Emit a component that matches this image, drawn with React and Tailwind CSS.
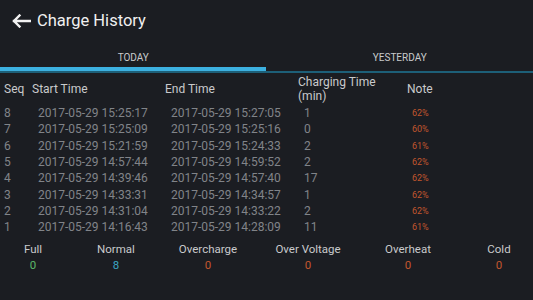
import { Fragment } from 'react';

const rows = [
  ['8', '2017-05-29 15:25:17', '2017-05-29 15:27:05', '1', '62%'],
  ['7', '2017-05-29 15:25:09', '2017-05-29 15:25:16', '0', '60%'],
  ['6', '2017-05-29 15:21:59', '2017-05-29 15:24:33', '2', '61%'],
  ['5', '2017-05-29 14:57:44', '2017-05-29 14:59:52', '2', '62%'],
  ['4', '2017-05-29 14:39:46', '2017-05-29 14:57:40', '17', '62%'],
  ['3', '2017-05-29 14:33:31', '2017-05-29 14:34:57', '1', '62%'],
  ['2', '2017-05-29 14:31:04', '2017-05-29 14:33:22', '2', '62%'],
  ['1', '2017-05-29 14:16:43', '2017-05-29 14:28:09', '11', '61%'],
];

const stats = [
  { label: 'Full', value: '0', color: 'text-[#5cb86a]', w: 'w-[66px]' },
  { label: 'Normal', value: '8', color: 'text-[#3ba6c2]', w: 'w-[100px]' },
  { label: 'Overcharge', value: '0', color: 'text-[#c2562e]', w: 'w-[84px]' },
  { label: 'Over Voltage', value: '0', color: 'text-[#c2562e]', w: 'w-[116px]' },
  { label: 'Overheat', value: '0', color: 'text-[#c2562e]', w: 'w-[84px]' },
  { label: 'Cold', value: '0', color: 'text-[#c2562e]', w: 'w-[98px]' },
];

export default function App() {
  return (
    <div className="flex h-[300px] w-[533px] flex-col overflow-hidden bg-[#1b1d22] font-['Roboto',sans-serif]">
      <div className="flex h-[42px] items-center pl-[12px]">
        <svg width="19" height="14" viewBox="0 0 19 14" fill="none" stroke="#f2f2f2" strokeWidth="2.4" strokeLinecap="square">
          <path d="M2 7h16M7.5 1.5L2 7l5.5 5.5" />
        </svg>
        <span className="ml-[6px] text-[16.5px] text-[#f0f0f0]">Charge History</span>
      </div>
      <div className="flex h-[25px] items-end pb-[3px] text-[10px] leading-[12px] text-[#c9cacc]">
        <div className="flex-1 text-center">TODAY</div>
        <div className="flex-1 text-center">YESTERDAY</div>
      </div>
      <div className="relative h-[6px]">
        <div className="absolute left-0 top-0 h-[5px] w-[266px] bg-[#3cb0e0]" />
        <div className="absolute bottom-0 left-0 h-[2px] w-full bg-[#1d5f78]" />
      </div>
      <div className="grid grid-cols-[28px_133px_133px_104px_1fr] pl-[4px] text-[12px] leading-[14px]">
        <div className="flex h-[32px] items-center text-[#c9cacc]">Seq</div>
        <div className="flex h-[32px] items-center text-[#c9cacc]">Start Time</div>
        <div className="flex h-[32px] items-center text-[#c9cacc]">End Time</div>
        <div className="flex h-[32px] items-center text-[#c9cacc]">Charging Time<br />(min)</div>
        <div className="flex h-[32px] items-center pl-[5px] text-[#c9cacc]">Note</div>
        {rows.map((r) => (
          <Fragment key={r[0]}>
            <div className="flex h-[16.3px] items-center text-[#818489]">{r[0]}</div>
            <div className="flex h-[16.3px] items-center pl-[6px] text-[#818489]">{r[1]}</div>
            <div className="flex h-[16.3px] items-center pl-[6px] text-[#818489]">{r[2]}</div>
            <div className="flex h-[16.3px] items-center pl-[6px] text-[#818489]">{r[3]}</div>
            <div className="flex h-[16.3px] items-center pl-[10px] text-[9px] text-[#c2562e]">{r[4]}</div>
          </Fragment>
        ))}
      </div>
      <div className="mt-[6px] flex">
        {stats.map((s) => (
          <div key={s.label} className={`${s.w} flex shrink-0 flex-col items-center text-[11.5px] leading-[16px]`}>
            <span className="text-[#c9cacc]">{s.label}</span>
            <span className={s.color}>{s.value}</span>
          </div>
        ))}
      </div>
    </div>
  );
}
